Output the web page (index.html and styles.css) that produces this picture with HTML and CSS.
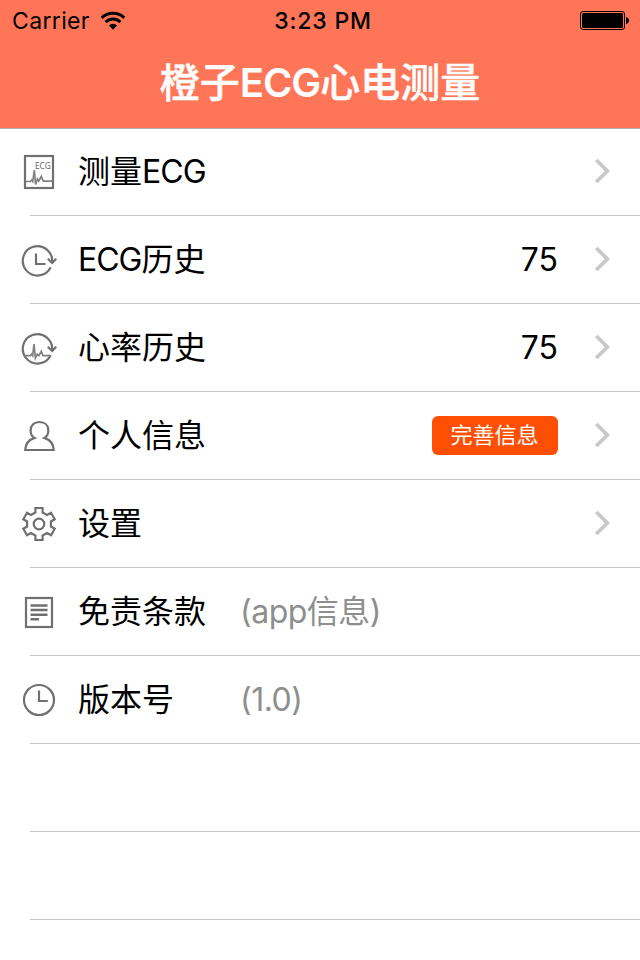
FILE: index.html
```html
<!DOCTYPE html>
<html lang="zh-CN">
<head>
<meta charset="utf-8">
<title>橙子ECG心电测量</title>
<link rel="stylesheet" href="styles.css">
</head>
<body>
<svg class="defs" width="0" height="0">
  <symbol id="chevron" viewBox="0 0 18 28"><path d="M3.300 3 14.300 14 3.300 25" fill="none" stroke="#c7c7cc" stroke-width="3.800"/></symbol>
</svg>
<header class="header">
  <div class="status">
    <div class="network">
      <span class="carrier">Carrier</span>
      <svg class="wifi" width="26" height="20" viewBox="0 0 26 20">
        <path d="M1.700 6.900a16.200 16.200 0 0 1 22.600 0M5.600 11a10.600 10.600 0 0 1 14.800 0" fill="none" stroke="#000" stroke-width="3"/>
        <path d="M8.900 14.400a5.900 5.900 0 0 1 8.200 0L13 18.700z"/>
      </svg>
    </div>
    <span class="time">3:23 PM</span>
    <svg class="battery" width="50" height="20" viewBox="0 0 50 20">
      <rect x=".5" y=".5" width="44" height="18" rx="2.500" fill="none" stroke="#000"/>
      <rect x="2" y="2" width="41" height="15" rx="1.500"/>
      <path d="M46 6c2 .3 3 1.600 3 3.500s-1 3.200-3 3.500z"/>
    </svg>
  </div>
  <h1 class="title">橙子<span class="title-latin">ECG</span>心电测量</h1>
</header>
<main class="list">
  <div class="row">
    <svg class="icon" viewBox="0 0 40 40">
      <rect x="5" y="4" width="28" height="32"/>
      <path class="wave" d="M6 29.500h4.500l1.300-1.500 1 1.500L14.300 18l1.300 14.500 1.900-5.500 1.300 2 2.500-4.500 2 4.700H32"/>
      <text class="icon-text" x="15" y="17">ECG</text>
    </svg>
    <span class="label">测量<span class="latin">ECG</span></span>
    <svg class="chevron"><use href="#chevron"/></svg>
  </div>
  <div class="row">
    <svg class="icon" viewBox="0 0 40 40">
      <path d="M30.700 27.300A14.700 14.700 0 1 1 32.100 22.500M27.800 18.800l4.400 4.200 4-4.200M16 13.500V24h9.500"/>
    </svg>
    <span class="label"><span class="latin">ECG</span>历史</span>
    <span class="count">75</span>
    <svg class="chevron"><use href="#chevron"/></svg>
  </div>
  <div class="row">
    <svg class="icon" viewBox="0 0 40 40">
      <path d="M30.700 27.300A14.700 14.700 0 1 1 32.100 22.500M27.800 18.800l4.400 4.200 4-4.200"/>
      <path class="wave" d="M4.500 27.600h6l1.300-1.600.9 1.600L14 16l1.400 14 1.800-3.800 1.600 1.400 2.500-4.300 1.500 4.300h8"/>
    </svg>
    <span class="label">心率历史</span>
    <span class="count">75</span>
    <svg class="chevron"><use href="#chevron"/></svg>
  </div>
  <div class="row">
    <svg class="icon" viewBox="0 0 40 40">
      <path d="M5.200 34h28.500c-.2-6-3.500-10.200-9.400-12.100 2.700-1.500 4-4.300 4-7.500 0-5-3.500-8.400-8.800-8.400s-8.900 3.400-8.900 8.400c0 3.200 1.300 6 4 7.500-5.800 1.900-9.200 6.100-9.400 12.100z"/>
    </svg>
    <span class="label">个人信息</span>
    <span class="badge">完善信息</span>
    <svg class="chevron"><use href="#chevron"/></svg>
  </div>
  <div class="row">
    <svg class="icon" viewBox="0 0 40 40">
      <path transform="translate(19 20)" d="M-3.600-11.500V-16H3.600v4.500L8.100-9 12-11.300 15.700-4.700 11.900-2.500v5L15.700 4.700 12 11.300 8.100 9 3.600 11.500V16h-7.200v-4.500L-8.100 9-12 11.300-15.700 4.700-11.900 2.500v-5L-15.700-4.700-12-11.300-8.100-9z"/>
      <circle cx="19" cy="20" r="5.300"/>
    </svg>
    <span class="label">设置</span>
    <svg class="chevron"><use href="#chevron"/></svg>
  </div>
  <div class="row">
    <svg class="icon" viewBox="0 0 40 40">
      <rect x="6" y="6" width="26" height="29"/>
      <path class="lines" d="M10.500 13.500h17M10.500 18h17M10.500 22.700h17M10.500 27.300H19"/>
    </svg>
    <span class="label">免责条款</span>
    <span class="note">(app信息)</span>
  </div>
  <div class="row">
    <svg class="icon" viewBox="0 0 40 40">
      <circle cx="19" cy="20" r="15"/>
      <path d="M19 10.500V21h8.800"/>
    </svg>
    <span class="label">版本号</span>
    <span class="note">(1.0)</span>
  </div>
  <div class="row"></div>
  <div class="row"></div>
</main>
</body>
</html>
```
FILE: styles.css
```css
* { box-sizing: border-box; }
body {
  margin: 0;
  height: 960px;
  overflow: hidden;
  background: #fff;
  color: #000;
  font-family: Inter, "Noto Sans CJK SC", sans-serif;
}
.defs { position: absolute; }
.header {
  height: 129px;
  background: #ff7558;
  border-bottom: 1px solid #b2b2b2;
}
.status {
  display: grid;
  grid-template-columns: 1fr auto 1fr;
  align-items: center;
  height: 42px;
  padding: 0 10px 0 12px;
}
.network { display: flex; align-items: center; gap: 10px; }
.wifi { margin-bottom: 1px; }
.carrier { font-size: 23px; letter-spacing: .35px; line-height: 42px; }
.time { padding-left: 4px; font-size: 23px; font-weight: 550; letter-spacing: .8px; line-height: 42px; }
.battery { justify-self: end; }
.title {
  margin: 0;
  height: 84px;
  color: #fff;
  font-size: 40px;
  font-weight: 500;
  line-height: 82px;
  text-align: center;
  white-space: nowrap;
  -webkit-text-stroke: .5px #fff;
}
.title-latin { font-weight: 600; letter-spacing: -1px; -webkit-text-stroke: 0; }
.list { margin-top: -1px; }
.row {
  display: flex;
  align-items: center;
  height: 88px;
  padding: 0 29px 0 20px;
  background: linear-gradient(#c8c7cc, #c8c7cc) 30px 100% / 100% 1px no-repeat;
}
.icon {
  flex: none;
  width: 40px;
  height: 40px;
  fill: none;
  stroke: #707070;
  stroke-width: 2.2;
}
.lines { stroke-width: 2.4; }
.wave { stroke-width: 1.7; stroke: #808080; }
.icon-text { fill: #606060; stroke: none; font: 8.3px "Open Sans", sans-serif; }
.label {
  width: 162px;
  margin-left: 18px;
  font-size: 32px;
  line-height: 88px;
  height: 88px;
  white-space: nowrap;
}
.latin { letter-spacing: -1px; }
.note { color: #8e8e8e; font-size: 32px; line-height: 88px; height: 88px; letter-spacing: -.5px; }
.count { margin-left: auto; font-size: 32px; line-height: 88px; height: 88px; }
.badge {
  margin: 0 0 2px auto;
  width: 126px;
  height: 39px;
  border-radius: 6px;
  background: #ff4f05;
  color: #fff;
  font-size: 22px;
  line-height: 38px;
  text-align: center;
  text-indent: -1px;
}
.chevron { flex: none; width: 18px; height: 28px; margin: 0 0 2px auto; }
.count + .chevron, .badge + .chevron { margin-left: 35px; }
```
